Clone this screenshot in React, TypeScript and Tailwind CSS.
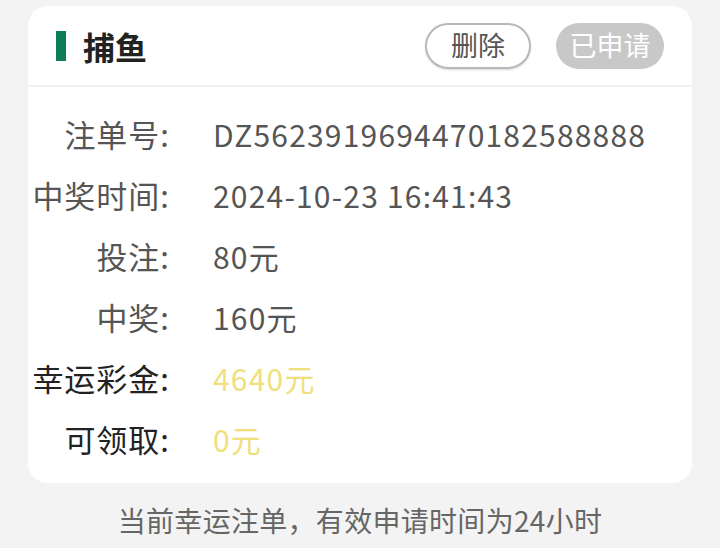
import React from "react"

const rows = [
    { label: "注单号:", value: "DZ5623919694470182588888", strong: false, gold: false },
    { label: "中奖时间:", value: "2024-10-23 16:41:43", strong: false, gold: false },
    { label: "投注:", value: "80元", strong: false, gold: false },
    { label: "中奖:", value: "160元", strong: false, gold: false },
    { label: "幸运彩金:", value: "4640元", strong: true, gold: true },
    { label: "可领取:", value: "0元", strong: true, gold: true },
]

export default function App() {
    return (
        <div
            className="h-[548px] w-[720px] overflow-hidden bg-[#f3f3f3] pt-[6px]"
            style={{ fontFamily: '"Noto Sans CJK SC", "Noto Sans", sans-serif' }}
        >
            <div className="mx-[28px] rounded-[20px] bg-white">
                <div className="flex h-[81px] items-center border-b-2 border-[#f2f2f2] pl-[28px] pr-[28px]">
                    <div className="h-[30px] w-[10px] bg-[#0d7d5a]" />
                    <h1 className="ml-[17px] text-[32px] font-bold leading-none text-[#222]">捕鱼</h1>
                    <div className="ml-auto flex items-center gap-[25px]">
                        <button className="flex h-[46px] w-[106px] items-center justify-center rounded-full border-2 border-[#b8b8b8] text-[27px] text-[#555] shadow-[0_1px_2px_rgba(0,0,0,0.15)]">
                            删除
                        </button>
                        <button className="flex h-[46px] w-[108px] items-center justify-center rounded-full bg-[#c8c8c8] text-[27px] text-white">
                            已申请
                        </button>
                    </div>
                </div>

                <div className="pb-[13px] pt-[17px]">
                    {rows.map((row) => (
                        <div key={row.label} className="flex h-[61px] items-center">
                            <div
                                className={`w-[142px] text-right text-[31px] tracking-[1px] ${row.strong ? "text-[#222]" : "text-[#555]"}`}
                            >
                                {row.label}
                            </div>
                            <div
                                className={`ml-[43px] text-[30px] tracking-[1.2px] ${row.gold ? "text-[#f0e07c]" : "text-[#555]"}`}
                            >
                                {row.value}
                            </div>
                        </div>
                    ))}
                </div>
            </div>

            <p className="mt-[16px] text-center text-[28px] tracking-[0.3px] text-[#666]">当前幸运注单，有效申请时间为24小时</p>
        </div>
    )
}
